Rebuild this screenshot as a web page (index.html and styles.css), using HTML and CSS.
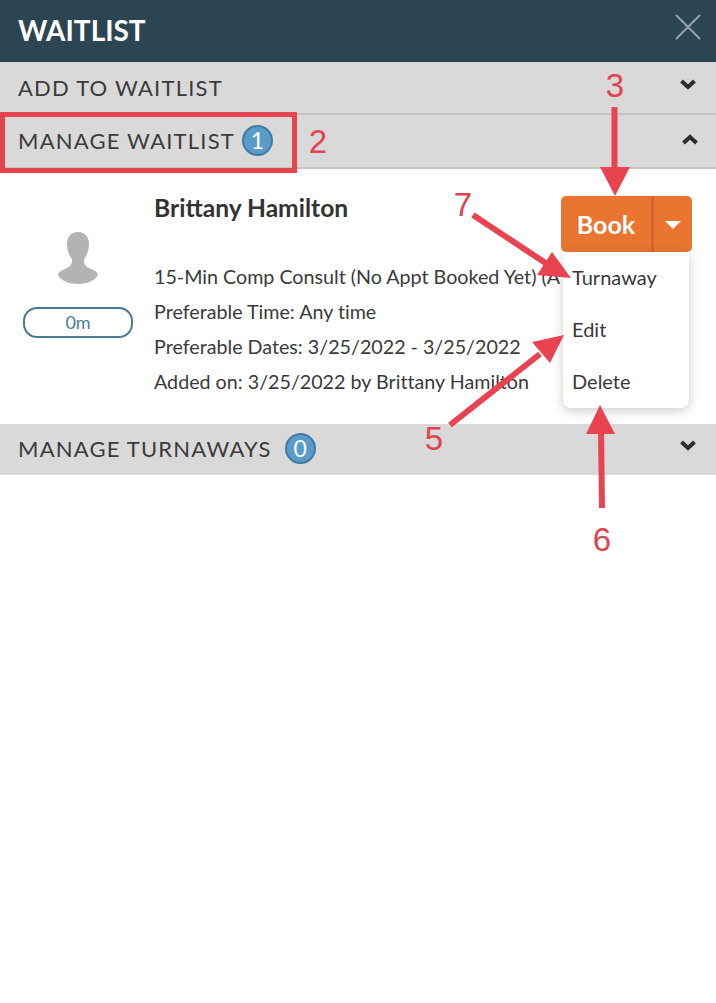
FILE: index.html
```html
<!DOCTYPE html>
<html lang="en">
<head>
    <meta charset="UTF-8">
    <meta name="viewport" content="width=device-width, initial-scale=1.0">
    <title>Waitlist</title>
    <link rel="stylesheet" href="styles.css">
</head>
<body>
    <header class="topbar">
        <h1>WAITLIST</h1>
        <svg class="close" width="26" height="26" viewBox="0 0 26 26"><path d="M1 1L25 25M25 1L1 25"/></svg>
    </header>

    <div class="section first">
        <span class="section-title">ADD TO WAITLIST</span>
        <svg class="chev" width="18" height="12" viewBox="0 0 18 12"><path d="M2.500 3L9 9L15.500 3"/></svg>
    </div>
    <div class="section second">
        <span class="section-title">MANAGE WAITLIST</span>
        <span class="badge">1</span>
        <svg class="chev up" width="18" height="12" viewBox="0 0 18 12"><path d="M2.500 9L9 3L15.500 9"/></svg>
    </div>

    <div class="card">
        <div class="avatar-col">
            <svg class="avatar" width="42" height="52" viewBox="0 0 42 52">
                <path d="M21 0C14 0 10 5 10 12C10 19 12.500 24 15 27C15.500 31 14 34 9 36.500C4 38.500 1 40.500 1 43C4 49 13 52 21 52C29 52 38 49 41 43C41 40.500 38 38.500 33 36.500C28 34 26.500 31 27 27C29.500 24 32 19 32 12C32 5 28 0 21 0Z"/>
            </svg>
            <div class="time-pill">0m</div>
        </div>
        <div class="info">
            <div class="name">Brittany Hamilton</div>
            <div class="detail">15-Min Comp Consult (No Appt Booked Yet) (A</div>
            <div class="detail">Preferable Time: Any time</div>
            <div class="detail">Preferable Dates: 3/25/2022 - 3/25/2022</div>
            <div class="detail">Added on: 3/25/2022 by Brittany Hamilton</div>
        </div>
        <div class="actions">
            <div class="book-group">
                <button class="book" type="button">Book</button>
                <button class="caret-btn" type="button"><span class="caret"></span></button>
            </div>
            <ul class="menu">
                <li>Turnaway</li>
                <li>Edit</li>
                <li>Delete</li>
            </ul>
        </div>
    </div>

    <div class="section third">
        <span class="section-title">MANAGE TURNAWAYS</span>
        <span class="badge">0</span>
        <svg class="chev" width="18" height="12" viewBox="0 0 18 12"><path d="M2.500 3L9 9L15.500 3"/></svg>
    </div>

    <!-- red markup drawn on top of the screenshot -->
    <div class="mark-box"></div>
    <svg class="marks" width="716" height="1003" viewBox="0 0 716 1003">
        <path class="shaft" d="M614.500 107V170"/>
        <polygon points="600,167 630,167 615,196"/>
        <path class="shaft" d="M473 215L550 266"/>
        <polygon points="552,252 537,275 571,278"/>
        <path class="shaft" d="M450 425L540 354"/>
        <polygon points="532,342 550,363 564,335"/>
        <path class="shaft" d="M602 508L601 430"/>
        <polygon points="586,434 615,434 600,405"/>
        <text x="615" y="97">3</text>
        <text x="318" y="153">2</text>
        <text x="463" y="216">7</text>
        <text x="434" y="450">5</text>
        <text x="602" y="551">6</text>
    </svg>
</body>
</html>
```

FILE: styles.css
```css
html, body {
    height: 100%;
}
body {
    font-family: Lato, "Open Sans", sans-serif;
    margin: 0;
    position: relative;
    background-color: #fff;
    color: #3a3a3a;
    overflow: hidden;
}
.topbar {
    display: flex;
    align-items: center;
    justify-content: space-between;
    height: 62px;
    padding: 0 15px 0 18px;
    box-sizing: border-box;
    background-color: #2c4553;
}
.topbar h1 {
    margin: 0 0 2px;
    color: #fff;
    font-size: 28px;
    font-weight: 700;
}
.close {
    margin-bottom: 9px;
}
.close path {
    fill: none;
    stroke: #97a6ae;
    stroke-width: 2;
}
.section {
    display: flex;
    align-items: center;
    padding: 0 19px 0 18px;
    box-sizing: border-box;
    background-color: #d9d9d9;
}
.section.first {
    height: 53px;
    border-bottom: 2px solid #c8c4c4;
}
.section.second {
    height: 54px;
    padding-bottom: 2px;
    border-bottom: 2px solid #c8c4c4;
}
.section.third {
    height: 51px;
    padding-bottom: 2px;
}
.section-title {
    font-size: 22px;
    letter-spacing: 1.2px;
    color: #3b3b3b;
}
.badge {
    width: 31px;
    height: 31px;
    margin-left: 7px;
    box-sizing: border-box;
    border: 2px solid #3f7ba5;
    border-radius: 50%;
    background-color: #5a9bc9;
    color: #fff;
    font-size: 23px;
    line-height: 27px;
    text-align: center;
}
.section.third .badge {
    margin-left: 13px;
}
.chev {
    margin-left: auto;
    margin-bottom: 7px;
}
.chev.up {
    margin-right: -2px;
    margin-bottom: 0;
}
.chev path {
    fill: none;
    stroke: #2d2d2d;
    stroke-width: 4;
}
.card {
    display: flex;
    height: 255px;
    box-sizing: border-box;
    padding: 26px 24px 0 23px;
}
.avatar-col {
    width: 110px;
    flex-shrink: 0;
    padding-top: 37px;
    text-align: center;
}
.avatar {
    display: block;
    margin: 0 auto 23px;
}
.avatar path {
    fill: #b3b3b3;
}
.time-pill {
    height: 31px;
    box-sizing: border-box;
    border: 2px solid #4a7a93;
    border-radius: 14px;
    color: #4a7d97;
    font-size: 18px;
    line-height: 27px;
}
.info {
    flex: 1;
    min-width: 0;
    margin-left: 21px;
    white-space: nowrap;
}
.name {
    margin-bottom: 38px;
    font-size: 24.600px;
    font-weight: 700;
    line-height: 26px;
    color: #333;
}
.detail {
    font-size: 19.700px;
    font-variant-ligatures: none;
    line-height: 35px;
}
.actions {
    position: relative;
    width: 131px;
    padding-top: 1px;
    flex-shrink: 0;
}
.book-group {
    display: flex;
    height: 56px;
    border-radius: 5px;
    background-color: #e97530;
    overflow: hidden;
}
.book-group button {
    border: none;
    padding: 0;
    background: none;
    color: #fff;
    font-family: inherit;
}
.book {
    width: 90px;
    font-size: 25px;
    font-weight: 700;
}
.book-group .caret-btn {
    flex: 1;
    border-left: 3px solid #d5662b;
}
.caret {
    display: inline-block;
    border-top: 8px solid #fff;
    border-left: 8px solid transparent;
    border-right: 8px solid transparent;
}
.menu {
    position: absolute;
    top: 57px;
    left: 2px;
    width: 126px;
    height: 156px;
    margin: 0;
    padding: 0;
    box-sizing: border-box;
    list-style: none;
    border-radius: 0 0 8px 8px;
    background-color: #fff;
    box-shadow: 0 3px 12px rgba(0, 0, 0, 0.2);
}
.menu li {
    height: 52px;
    padding-left: 9px;
    font-size: 20px;
    line-height: 50px;
}
.mark-box {
    position: absolute;
    top: 112px;
    left: 0;
    width: 297px;
    height: 61px;
    box-sizing: border-box;
    border: 5px solid #e8444f;
}
.marks {
    position: absolute;
    top: 0;
    left: 0;
}
.marks .shaft {
    fill: none;
    stroke: #e8444f;
    stroke-width: 6;
}
.marks polygon {
    fill: #e8444f;
}
.marks text {
    fill: #e0444f;
    font-family: "Liberation Sans", Arial, sans-serif;
    font-size: 33px;
    text-anchor: middle;
}
```
